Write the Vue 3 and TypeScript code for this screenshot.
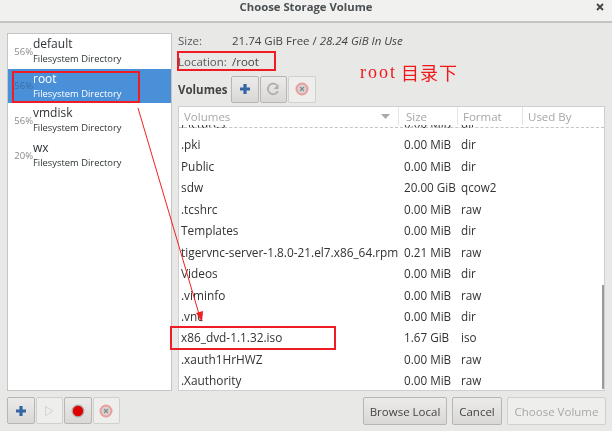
<script setup lang="ts">
interface Pool { pct: string; name: string; selected?: boolean }
interface Vol { name: string; size: string; format: string }
const pools: Pool[] = [
  { pct: '56%', name: 'default' },
  { pct: '56%', name: 'root', selected: true },
  { pct: '56%', name: 'vmdisk' },
  { pct: '20%', name: 'wx' },
]
const vols: Vol[] = [
  { name: 'Pictures', size: '0.00 MiB', format: 'dir' },
  { name: '.pki', size: '0.00 MiB', format: 'dir' },
  { name: 'Public', size: '0.00 MiB', format: 'dir' },
  { name: 'sdw', size: '20.00 GiB', format: 'qcow2' },
  { name: '.tcshrc', size: '0.00 MiB', format: 'raw' },
  { name: 'Templates', size: '0.00 MiB', format: 'dir' },
  { name: 'tigervnc-server-1.8.0-21.el7.x86_64.rpm', size: '0.21 MiB', format: 'raw' },
  { name: 'Videos', size: '0.00 MiB', format: 'dir' },
  { name: '.viminfo', size: '0.00 MiB', format: 'raw' },
  { name: '.vnc', size: '0.00 MiB', format: 'dir' },
  { name: 'x86_dvd-1.1.32.iso', size: '1.67 GiB', format: 'iso' },
  { name: '.xauth1HrHWZ', size: '0.00 MiB', format: 'raw' },
  { name: '.Xauthority', size: '0.00 MiB', format: 'raw' },
]
</script>

<template>
  <div class="win">
    <header class="title">
      <span>Choose Storage Volume</span>
      <svg class="close" width="8" height="8" viewBox="0 0 8 8"><path d="M1 1 7 7M7 1 1 7" stroke="#444" stroke-width="1.8" /></svg>
    </header>
    <main class="body">
      <aside class="left">
        <ul class="pools">
          <li v-for="p in pools" :key="p.name" class="pool" :class="{ sel: p.selected }">
            <span class="pct">{{ p.pct }}</span>
            <div class="pinfo">
              <div class="pname">{{ p.name }}</div>
              <div class="ptype">Filesystem Directory</div>
            </div>
          </li>
        </ul>
        <div class="tools">
          <button class="tb"><svg width="12" height="12" viewBox="0 0 12 12"><path d="M6 1v10M1 6h10" stroke="#3465a4" stroke-width="3.2" /></svg></button>
          <button class="tb off"><svg width="12" height="12" viewBox="0 0 12 12"><path d="M2.5 1.5 10 6l-7.5 4.5z" fill="none" stroke="#d2d2d2" /></svg></button>
          <button class="tb"><svg width="14" height="14" viewBox="0 0 14 14"><circle cx="7" cy="7" r="5.8" fill="#e00000" stroke="#a9a9a9" stroke-width="1.3" /></svg></button>
          <button class="tb off"><svg width="14" height="14" viewBox="0 0 14 14"><circle cx="7" cy="7" r="5.5" fill="#d5d5d5" stroke="#eb9c9c" stroke-width="2" /><path d="M5 5l4 4M9 5l-4 4" stroke="#888" stroke-width="1.2" /></svg></button>
        </div>
      </aside>
      <section class="right">
        <div class="info">
          <div class="irow"><span class="lab">Size:</span><span class="val">21.74 GiB Free / <i>28.24 GiB In Use</i></span></div>
          <div class="irow"><span class="lab">Location:</span><span class="val">/root</span></div>
        </div>
        <div class="volbar">
          <b>Volumes</b>
          <div class="group">
            <button class="tb"><svg width="12" height="12" viewBox="0 0 12 12"><path d="M6 1v10M1 6h10" stroke="#3465a4" stroke-width="3.2" /></svg></button>
            <button class="tb"><svg width="14" height="14" viewBox="0 0 14 14"><path d="M12 9.2A5.3 5.3 0 1 1 10.8 3" fill="none" stroke="#adadad" stroke-width="1.8" /><path d="M12.5 2v5H7.5z" fill="#adadad" /></svg></button>
            <button class="tb off"><svg width="14" height="14" viewBox="0 0 14 14"><circle cx="7" cy="7" r="5.5" fill="#d5d5d5" stroke="#eb9c9c" stroke-width="2" /><path d="M5 5l4 4M9 5l-4 4" stroke="#888" stroke-width="1.2" /></svg></button>
          </div>
        </div>
        <div class="table">
          <div class="thead">
            <div class="th c1"><span>Volumes</span><svg width="9" height="5" viewBox="0 0 9 5"><path d="M0 0h9L4.5 5z" fill="#aaa" /></svg></div>
            <div class="th c2">Size</div>
            <div class="th c3">Format</div>
            <div class="th c4">Used By</div>
          </div>
          <div class="tbody">
            <div class="rows">
              <div v-for="v in vols" :key="v.name" class="row">
                <div class="c1 name">{{ v.name }}</div>
                <div class="c2">{{ v.size }}</div>
                <div class="c3">{{ v.format }}</div>
                <div class="c4"></div>
              </div>
            </div>
            <div class="dash"></div>
            <div class="thumb"></div>
          </div>
        </div>
        <div class="actions">
          <button class="btn">Browse Local</button>
          <button class="btn">Cancel</button>
          <button class="btn dis">Choose Volume</button>
        </div>
      </section>
    </main>

    <div class="mark m1"></div>
    <div class="mark m2"></div>
    <div class="mark m3"></div>
    <div class="note"><span class="latin">root</span><span class="cjk">目录下</span></div>
    <svg class="arrow" width="612" height="431" viewBox="0 0 612 431">
      <path d="M138 108 199 314" stroke="#f02020" stroke-width="1" fill="none" />
      <path d="M202 322 196 313 203 311z" fill="#f02020" />
    </svg>
  </div>
</template>

<style>
html, body { margin: 0; background: #e8e8e7; }
</style>

<style scoped>
.win {
  position: relative; width: 612px; height: 431px; overflow: hidden; background: #e8e8e7;
  font-family: "Open Sans", "Noto Sans", sans-serif; font-size: 12px; color: #2e3436;
  filter: blur(0.35px);
}
.title {
  height: 21px; box-sizing: content-box; border-bottom: 2px solid #c4c4c2; background: #f1f1f0;
  display: flex; align-items: flex-start; justify-content: center; position: relative;
  font-weight: 700; font-size: 11.3px; line-height: 14px; color: #4a4f50;
}
.close { position: absolute; right: 8px; top: 3px; }
.body { display: flex; gap: 6px; padding: 10px 6px 0 7px; }
.left { width: 165px; display: flex; flex-direction: column; flex: none; }
.pools {
  list-style: none; margin: 0; padding: 0; height: 358px; box-sizing: border-box;
  background: #fff; border: 1px solid #c4c4c2;
}
.pool { display: flex; height: 34.6px; align-items: center; color: #2e3436; }
.pool.sel { background: #4a90d9; color: #fff; }
.pct { width: 25px; text-align: right; font-size: 9.5px; color: #8a8a8a; flex: none; }
.pool.sel .pct { color: #3a6ea5; }
.pname { font-size: 12px; line-height: 15px; }
.ptype { font-size: 9.4px; line-height: 15px; }
.tools { display: flex; gap: 1px; margin-top: 6px; }
.tb {
  width: 27.5px; height: 27px; padding: 0; box-sizing: border-box; display: flex; align-items: center; justify-content: center;
  border: 1px solid #b6b6b3; border-radius: 2px; background: linear-gradient(#ecebea, #d9d8d6);
}
.tb.off { background: #eeeeed; border-color: #d0d0ce; }
.right { width: 428px; flex: none; display: flex; flex-direction: column; margin-top: -3px; }
.info { height: 42px; }
.irow { display: flex; height: 21px; align-items: center; color: #555a5b; font-size: 11.5px; }
.lab { width: 54px; }
.val { color: #444; }
.val i { font-style: italic; }
.volbar { display: flex; align-items: center; height: 28px; margin: 3px 0; font-size: 11.5px; color: #444; }
.volbar b { font-weight: 700; width: 53px; }
.group { display: flex; gap: 1px; }
.table { width: 427px; height: 285px; background: #fff; border: 1px solid #cfcfcd; box-sizing: border-box; display: flex; flex-direction: column; }
.thead { display: flex; height: 18px; flex: none; }
.th { display: flex; align-items: center; color: #a4a7a8; font-size: 11.5px; border-right: 1px solid #e4e4e4; box-sizing: border-box; padding-left: 5px; }
.th.c1 { justify-content: space-between; padding-right: 8px; }
.th.c2 { padding-left: 7px; }
.th.c4 { border-right: 0; }
.c1 { width: 220px; flex: none; }
.c2 { width: 59px; flex: none; }
.c3 { width: 65px; flex: none; }
.c4 { flex: 1; }
.tbody { flex: 1; position: relative; overflow: hidden; }
.rows { margin-top: -12.7px; }
.row { display: flex; height: 21.45px; align-items: center; color: #333; }
.row .c1 { padding-left: 2px; box-sizing: border-box; white-space: nowrap; overflow: hidden; font-size: 11.85px; }
.row .c2 { width: 62px; padding-left: 5px; box-sizing: border-box; font-size: 11.7px; white-space: nowrap; }
.row .c3 { font-size: 11.7px; width: 60px; }
.dash { position: absolute; left: 0; right: 0; top: 2px; border-top: 1px dashed #c4c4c4; }
.thumb { position: absolute; right: 0; top: 160px; bottom: 1px; width: 2px; background: #9a9a9a; }
.actions { display: flex; justify-content: flex-end; gap: 5px; margin-top: 6px; }
.btn {
  height: 28px; box-sizing: border-box; padding: 0; font: inherit; font-size: 11.5px; color: #444;
  border: 1px solid #b6b6b3; border-radius: 2px; background: linear-gradient(#ecebea, #d9d8d6);
}
.btn:nth-child(1) { width: 84px; }
.btn:nth-child(2) { width: 50px; }
.btn.dis { width: 99px; background: #eeeeed; border-color: #d0d0ce; color: #a8a8a8; }
.mark { position: absolute; border: 2px solid #ee1c25; box-sizing: border-box; }
.m1 { left: 12px; top: 71px; width: 128px; height: 32px; }
.m2 { left: 177px; top: 51px; width: 99px; height: 20px; }
.m3 { left: 170px; top: 326px; width: 166px; height: 24px; }
.note { position: absolute; left: 360px; top: 61px; display: flex; align-items: center; gap: 4px; color: #f01818; line-height: 22px; }
.latin { font-family: "Liberation Serif", serif; font-size: 18px; letter-spacing: 2px; }
.cjk { font-family: "Noto Sans CJK SC", sans-serif; font-size: 18px; letter-spacing: 1px; }
.arrow { position: absolute; left: 0; top: 0; pointer-events: none; }
</style>
